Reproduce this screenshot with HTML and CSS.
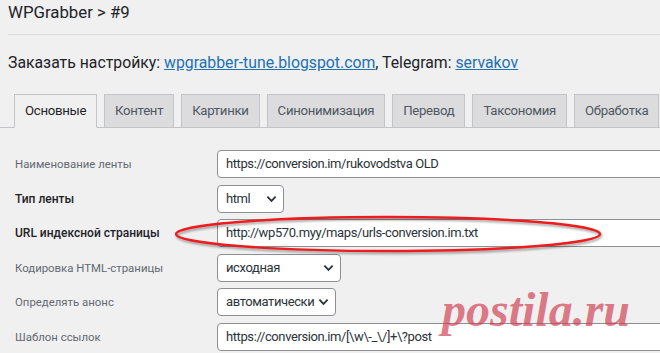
FILE: index.html
```html
<!DOCTYPE html>
<html lang="ru">
<head>
<meta charset="utf-8">
<title>WPGrabber</title>
<link rel="stylesheet" href="styles.css">
</head>
<body>
<div class="wrap">
  <h1 class="title">WPGrabber &gt; #9</h1>
  <hr class="sep">
  <p class="order">Заказать настройку: <a href="#">wpgrabber-tune.blogspot.com</a>, Telegram: <a href="#">servakov</a></p>
  <nav class="tabs">
    <span class="tab active">Основные</span>
    <span class="tab">Контент</span>
    <span class="tab">Картинки</span>
    <span class="tab">Синонимизация</span>
    <span class="tab">Перевод</span>
    <span class="tab">Таксономия</span>
    <span class="tab">Обработка</span>
  </nav>
  <div class="form">
    <label class="lbl">Наименование ленты</label>
    <div class="field wide">https://conversion.im/rukovodstva OLD</div>
    <label class="lbl strong">Тип ленты</label>
    <div class="field sel sel-html">html<svg class="chev" viewBox="0 0 12 8"><path d="M1.5 1.5 L6 6 L10.5 1.5"/></svg></div>
    <label class="lbl strong">URL индексной страницы</label>
    <div class="field wide">http://wp570.myy/maps/urls-conversion.im.txt</div>
    <label class="lbl">Кодировка HTML-страницы</label>
    <div class="field sel sel-enc">исходная<svg class="chev" viewBox="0 0 12 8"><path d="M1.5 1.5 L6 6 L10.5 1.5"/></svg></div>
    <label class="lbl">Определять анонс</label>
    <div class="field sel sel-auto">автоматически<svg class="chev" viewBox="0 0 12 8"><path d="M1.5 1.5 L6 6 L10.5 1.5"/></svg></div>
    <label class="lbl">Шаблон ссылок</label>
    <div class="field wide">https://conversion.im/[\w\-_\/]+\?post</div>
  </div>
</div>
<svg class="ellipse" viewBox="0 0 440 44"><ellipse cx="220" cy="22" rx="212" ry="17"/></svg>
<div class="watermark">postila.ru</div>
</body>
</html>
```
FILE: styles.css
```css
html, body {
  margin: 0;
  padding: 0;
  overflow: hidden;
  background: #f0f0f1;
}
body {
  width: 660px;
  height: 353px;
  position: relative;
  font-family: Roboto, "Open Sans", sans-serif;
  color: #1d2327;
}
.wrap {
  padding: 0 0 0 8px;
  overflow: hidden;
}
.title {
  margin: 0;
  padding-top: 1px;
  font-size: 16.8px;
  font-weight: 400;
  line-height: 22px;
  color: #1d2327;
}
.sep {
  margin: 11px 0 0 0;
  border: 0;
  border-top: 1px solid #dcdcde;
}
.order {
  margin: 17px 0 0 0;
  font-size: 15.8px;
  line-height: 22px;
  color: #1d2327;
}
.order a {
  color: #2271b1;
  text-decoration: underline;
}
.tabs {
  margin: 20px 0 0 -8px;
  padding-left: 14px;
  display: flex;
  gap: 7px;
  border-bottom: 1px solid #c3c4c7;
  height: 33px;
}
.tab {
  box-sizing: border-box;
  flex: none;
  height: 34px;
  padding: 0 10px;
  border: 1px solid #c3c4c7;
  background: #dcdcde;
  color: #50575e;
  font-size: 13.2px;
  letter-spacing: -0.3px;
  line-height: 32px;
  white-space: nowrap;
}
.tab.active {
  background: #f0f0f1;
  border-bottom-color: #f0f0f1;
  color: #1d2327;
}
.form {
  margin-top: 22px;
  display: grid;
  grid-template-columns: 209px 470px;
  row-gap: 6.5px;
  align-items: center;
}
.lbl {
  padding-left: 7px;
  font-size: 11.4px;
  color: #646970;
}
.lbl.strong {
  font-size: 12px;
  font-weight: 500;
  color: #1d2327;
}
.field {
  box-sizing: border-box;
  height: 28px;
  border: 1px solid #8c8f94;
  border-radius: 4px;
  background: #fff;
  padding: 0 8px;
  font-size: 13px;
  letter-spacing: -0.4px;
  line-height: 26px;
  color: #2c3338;
  white-space: nowrap;
  display: flex;
  align-items: center;
}
.field.wide {
  width: 470px;
}
.sel {
  justify-content: space-between;
  padding-right: 6px;
}
.sel-html { width: 67px; }
.sel-enc { width: 124px; }
.sel-auto { width: 119px; }
.chev {
  width: 11px;
  height: 8px;
  fill: none;
  stroke: #2c3338;
  stroke-width: 2;
  flex: none;
}
.ellipse {
  position: absolute;
  left: 168px;
  top: 212px;
  width: 440px;
  height: 44px;
  overflow: visible;
  filter: drop-shadow(1px 2px 1px rgba(0,0,0,0.35));
}
.ellipse ellipse {
  fill: none;
  stroke: #ee1c1c;
  stroke-width: 2.4;
}
.watermark {
  position: absolute;
  left: 442px;
  top: 286px;
  font-family: "Liberation Serif", serif;
  font-style: italic;
  font-weight: 700;
  font-size: 48px;
  line-height: 1;
  color: rgba(208, 58, 78, 0.66);
}
```
